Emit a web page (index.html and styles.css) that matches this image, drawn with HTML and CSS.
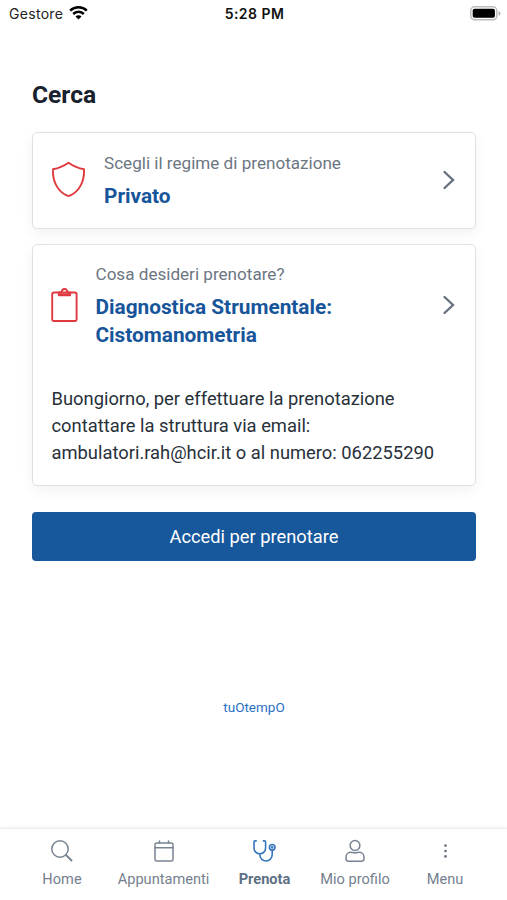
FILE: index.html
```html
<!DOCTYPE html>
<html lang="it">
<head>
<meta charset="utf-8">
<meta name="viewport" content="width=device-width, initial-scale=1">
<title>Cerca</title>
<link rel="stylesheet" href="styles.css">
</head>
<body>
<div class="screen">
  <header class="status">
    <div class="carrier"><span>Gestore</span>
      <svg width="19" height="14" viewBox="0 0 19 14" fill="none" stroke="#000" stroke-width="2.5"><path d="M1.2 4.700a11.800 11.800 0 0 1 16.600 0"/><path d="M4.200 8a7.500 7.500 0 0 1 10.600 0"/><path d="M9.500 13.400 6.500 10.500a4.200 4.200 0 0 1 6 0z" fill="#000" stroke="none"/></svg>
    </div>
    <span class="time">5:28 PM</span>
    <svg class="battery" width="31" height="15" viewBox="0 0 31 15"><rect x=".8" y=".8" width="26" height="13" rx="3.8" fill="#fff" stroke="#bdbdbd" stroke-width="1.5"/><rect x="2.7" y="2.8" width="22.2" height="9" rx="1.8"/><path d="M28.6 5.2c2.4.6 2.4 3.8 0 4.4z" fill="#aaa"/></svg>
  </header>
  <main class="content">
    <h1 class="title">Cerca</h1>
    <section class="card card-plan">
      <div class="row">
        <svg class="lead shield" width="35" height="37" viewBox="0 0 35 37" fill="none" stroke="#e0393f" stroke-width="1.9" stroke-linejoin="round"><path d="M17.5 1.8C13 5 7.500 7.400 2 8.200C1.300 20 6.500 30 15.600 34.400Q17.500 35.300 19.400 34.400C28.500 30 33.700 20 33 8.200C27.500 7.400 22 5 17.500 1.800Z"/></svg>
        <div class="copy"><p class="label">Scegli il regime di prenotazione</p><p class="value">Privato</p></div>
        <svg class="chevron" width="13" height="20" viewBox="0 0 13 20" fill="none" stroke="#687080" stroke-width="2.400" stroke-linecap="round"><path d="m2.500 2 8.500 8L2.500 18"/></svg>
      </div>
    </section>
    <section class="card card-service">
      <div class="row">
        <svg class="lead clipboard" width="27" height="36" viewBox="0 0 27 36" fill="none" stroke="#e0393f" stroke-width="1.9" stroke-linejoin="round"><rect x="1.200" y="5.500" width="24.400" height="28.500" rx="1.800"/><path d="M7.800 5.500v2.700h11.400V5.500h-2.800a2.950 2.950 0 1 0-5.800 0z"/><path d="M8.500 7.300h10"/></svg>
        <div class="copy"><p class="label">Cosa desideri prenotare?</p><p class="value">Diagnostica Strumentale:<br>Cistomanometria</p></div>
        <svg class="chevron" width="13" height="20" viewBox="0 0 13 20" fill="none" stroke="#687080" stroke-width="2.400" stroke-linecap="round"><path d="m2.500 2 8.500 8L2.500 18"/></svg>
      </div>
      <p class="note">Buongiorno, per effettuare la prenotazione<br>contattare la struttura via email:<br>ambulatori.rah@hcir.it o al numero: 062255290</p>
    </section>
    <button class="primary">Accedi per prenotare</button>
    <a class="brand">tuOtempO</a>
  </main>
  <nav class="tabs">
    <a class="tab"><svg width="24" height="24" viewBox="0 0 24 24" fill="none" stroke="#788391" stroke-width="1.500" stroke-linecap="round"><circle cx="10" cy="10" r="8.200"/><path d="m16 16 5.500 5.500" stroke-width="1.900"/></svg><span>Home</span></a>
    <a class="tab"><svg width="24" height="24" viewBox="0 0 24 24" fill="none" stroke="#788391" stroke-width="1.500" stroke-linecap="round"><rect x="3" y="4" width="18" height="18" rx="1.600"/><path d="M3 8.800h18M7.500 2v2M16.500 2v2"/></svg><span>Appuntamenti</span></a>
    <a class="tab active"><svg width="24" height="24" viewBox="0 0 24 24" fill="none" stroke="#3576bd" stroke-width="1.600" stroke-linecap="round"><path d="M3.200 1.900H2Q1 1.900 1 3v6a5.800 5.800 0 0 0 11.600 0V3q0-1.100-1-1.100h-1.200M6.800 14.800v1a6.200 6.200 0 0 0 12.400 0V11.200"/><circle cx="19.200" cy="8.300" r="2.800"/><circle cx="19.200" cy="8.300" r=".6"/></svg><span>Prenota</span></a>
    <a class="tab"><svg width="24" height="24" viewBox="0 0 24 24" fill="none" stroke="#788391" stroke-width="1.500"><circle cx="12" cy="6.500" r="4.900"/><path d="M7.700 13.300C4.800 13.300 3 15.600 3 18.500v1.300q0 2.400 2.400 2.400h13.200q2.400 0 2.400-2.400v-1.300c0-2.900-1.800-5.200-4.700-5.200-1.400 0-2.200.7-4.300.7s-2.900-.7-4.300-.7Z"/></svg><span>Mio profilo</span></a>
    <a class="tab"><svg width="24" height="24" viewBox="0 0 24 24" fill="#687382"><circle cx="12.500" cy="6.600" r="1.350"/><circle cx="12.500" cy="12" r="1.350"/><circle cx="12.500" cy="17.400" r="1.350"/></svg><span>Menu</span></a>
  </nav>
</div>
</body>
</html>
```
FILE: styles.css
```css
* { box-sizing: border-box; }
body { margin: 0; background: #fff; font-family: Roboto, "Liberation Sans", sans-serif; }
p, h1 { margin: 0; }
svg { display: block; flex: none; }
.screen { height: 900px; display: flex; flex-direction: column; overflow: hidden; }
.status { height: 28px; padding: 0 6px 0 9px; display: grid; grid-template-columns: 1fr auto 1fr; align-items: center; font: 14px/28px Inter, sans-serif; color: #222; }
.carrier { display: flex; align-items: center; gap: 6px; letter-spacing: .3px; }
.carrier svg { margin-top: -2px; }
.time { font-weight: 600; color: #111; letter-spacing: .45px; margin-right: 1px; }
.battery { justify-self: end; margin-top: -2px; }
.content { flex: 1; padding: 49px 31px 0 32px; display: flex; flex-direction: column; }
.title { font-size: 24.6px; line-height: 36px; font-weight: 700; color: #18212d; }
.card { border: 1px solid #dfe1e4; border-radius: 5px; box-shadow: 0 5px 14px rgba(0, 0, 0, .05); background: #fff; padding: 0 20px 0 18px; white-space: nowrap; }
.card-plan { margin-top: 19px; height: 97px; padding-top: 16px; }
.card-service { margin-top: 15px; height: 242px; padding-top: 15px; }
.row { display: flex; align-items: center; }
.copy { flex: 1; }
.shield { margin-right: 18px; }
.clipboard { margin-right: 17.5px; }
.label { font-size: 17.1px; line-height: 28px; color: #6c7682; }
.value { margin-top: 5px; font-size: 20.8px; line-height: 28px; font-weight: 700; color: #17559b; }
.note { margin-top: 36px; padding-left: .5px; font-size: 18.35px; line-height: 27px; color: #28303a; }
.primary { margin: 26px 0 0; height: 49px; border: 0; border-radius: 4px; background: #17589c; color: #fff; font: 18.3px/49px Roboto, sans-serif; padding: 0; }
.brand { margin-top: 136px; text-align: center; font-size: 13.5px; line-height: 20px; color: #2a70c4; }
.tabs { height: 72px; padding: 10px 23px 0 22px; border-top: 1px solid #eee; box-shadow: 0 -1px 3px rgba(0, 0, 0, .06); display: grid; grid-template-columns: 80px 123px 79px 102px 78px; align-content: start; }
.tab { display: flex; flex-direction: column; align-items: center; gap: 6px; font-size: 14.6px; line-height: 20px; color: #75808e; }
.active { font-weight: 700; color: #5d7084; }
```
